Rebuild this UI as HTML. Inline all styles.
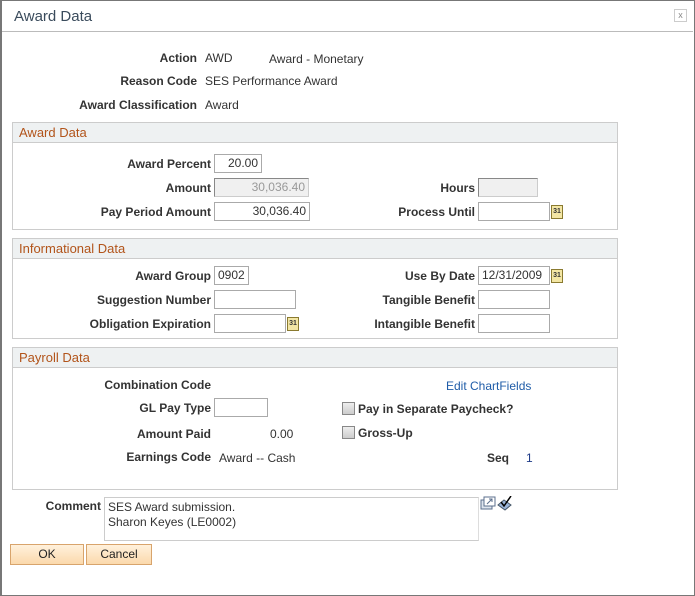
<!DOCTYPE html>
<html><head><style>
body{margin:0;width:695px;height:596px;background:#fff;font-family:"Liberation Sans",Arial,sans-serif;font-size:12px;color:#333;position:relative;overflow:hidden}
.a{position:absolute;white-space:nowrap;line-height:14px}
.l{font-weight:bold;text-align:right}
.in{position:absolute;height:17px;border:1px solid #aaa;background:#fff;box-sizing:content-box;font-size:12px;line-height:17px;padding:0 3px;color:#333;white-space:nowrap}
.sec{position:absolute;left:12px;width:604px;border:1px solid #ccc;border-top:none}
.hd{position:absolute;left:12px;width:606px;height:21px;background:#eef1f2;border:1px solid #ccc;box-sizing:border-box;color:#b2541a;font-size:13px;line-height:19px;padding-left:6px}
.cal{position:absolute;width:10px;height:12px;border:1px solid #8a7a30;background:#f3e6a4;font-size:7px;line-height:12px;text-align:center;font-weight:bold;color:#333}
.cb{position:absolute;width:11px;height:11px;border:1px solid #888;background:linear-gradient(#eee,#ccc)}
.btn{position:absolute;top:544px;height:19px;border:1px solid #d8a46c;background:linear-gradient(#fff1dc,#fbd9ac);text-align:center;line-height:19px;font-size:12px;color:#222}
</style></head><body>
<div style="position:absolute;left:0;top:0;width:695px;height:596px;border:1px solid #777;box-sizing:border-box;border-left:2px solid #777"></div>
<div style="position:absolute;left:2px;top:1px;width:691px;height:30px;border-bottom:1px solid #bbb"></div>
<div class="a" style="left:14px;top:8px;font-size:15px;line-height:18px;color:#3a4b5c">Award Data</div>
<div style="position:absolute;left:674px;top:9px;width:11px;height:11px;border:1px solid #ccc;font-size:9px;line-height:10px;text-align:center;color:#888">x</div>

<div class="a l" style="right:498px;top:51px">Action</div>
<div class="a" style="left:205px;top:51px">AWD</div>
<div class="a" style="left:269px;top:52px">Award - Monetary</div>
<div class="a l" style="right:498px;top:74px">Reason Code</div>
<div class="a" style="left:205px;top:74px">SES Performance Award</div>
<div class="a l" style="right:498px;top:98px">Award Classification</div>
<div class="a" style="left:205px;top:98px">Award</div>

<div class="sec" style="top:142px;height:87px"></div>
<div class="hd" style="top:122px">Award Data</div>
<div class="a l" style="right:484px;top:157px">Award Percent</div>
<div class="in" style="left:214px;top:154px;width:40px;text-align:right">20.00</div>
<div class="a l" style="right:484px;top:181px">Amount</div>
<div class="in" style="left:214px;top:178px;width:87px;text-align:right;background:#f0f0f0;color:#999;border-color:#888 #ccc #ccc #888">30,036.40</div>
<div class="a l" style="right:484px;top:205px">Pay Period Amount</div>
<div class="in" style="left:214px;top:202px;width:88px;text-align:right">30,036.40</div>
<div class="a l" style="right:220px;top:181px">Hours</div>
<div class="in" style="left:478px;top:178px;width:52px;background:#f0f0f0;border-color:#888 #ccc #ccc #888"></div>
<div class="a l" style="right:220px;top:205px">Process Until</div>
<div class="in" style="left:478px;top:202px;width:64px"></div>
<div class="cal" style="left:551px;top:205px">31</div>

<div class="sec" style="top:258px;height:80px"></div>
<div class="hd" style="top:238px">Informational Data</div>
<div class="a l" style="right:484px;top:269px">Award Group</div>
<div class="in" style="left:214px;top:266px;width:27px">0902</div>
<div class="a l" style="right:484px;top:293px">Suggestion Number</div>
<div class="in" style="left:214px;top:290px;width:74px"></div>
<div class="a l" style="right:484px;top:317px">Obligation Expiration</div>
<div class="in" style="left:214px;top:314px;width:64px"></div>
<div class="cal" style="left:287px;top:317px">31</div>
<div class="a l" style="right:220px;top:269px">Use By Date</div>
<div class="in" style="left:478px;top:266px;width:64px">12/31/2009</div>
<div class="cal" style="left:551px;top:269px">31</div>
<div class="a l" style="right:220px;top:293px">Tangible Benefit</div>
<div class="in" style="left:478px;top:290px;width:64px"></div>
<div class="a l" style="right:220px;top:317px">Intangible Benefit</div>
<div class="in" style="left:478px;top:314px;width:64px"></div>

<div class="sec" style="top:367px;height:122px"></div>
<div class="hd" style="top:347px">Payroll Data</div>
<div class="a l" style="right:484px;top:378px">Combination Code</div>
<div class="a" style="left:446px;top:379px;color:#1f5ca8">Edit ChartFields</div>
<div class="a l" style="right:484px;top:401px">GL Pay Type</div>
<div class="in" style="left:214px;top:398px;width:46px"></div>
<div class="cb" style="left:342px;top:402px"></div>
<div class="a l" style="left:358px;top:402px">Pay in Separate Paycheck?</div>
<div class="a l" style="right:484px;top:427px">Amount Paid</div>
<div class="a" style="left:270px;top:427px">0.00</div>
<div class="cb" style="left:342px;top:426px"></div>
<div class="a l" style="left:358px;top:426px">Gross-Up</div>
<div class="a l" style="right:484px;top:450px">Earnings Code</div>
<div class="a" style="left:219px;top:451px">Award -- Cash</div>
<div class="a l" style="left:487px;top:451px">Seq</div>
<div class="a" style="left:526px;top:451px;color:#1f3c88">1</div>

<div class="a l" style="right:594px;top:499px">Comment</div>
<div style="position:absolute;left:104px;top:497px;width:367px;height:38px;border:1px solid #ccc;border-right-color:#ddd;padding:2px 3px;font-size:12px;line-height:15px">SES Award submission.<br>Sharon Keyes (LE0002)</div>
<svg style="position:absolute;left:480px;top:496px" width="34" height="16"><rect x="1" y="4" width="11" height="9" fill="#dde4ee" stroke="#5b6f8c"/><rect x="4" y="1" width="11" height="9" fill="#fff" stroke="#5b6f8c"/><path d="M7 8 L12 3 M9 3 H12 V6" stroke="#5b6f8c" fill="none"/><path d="M18 9 L24 4 L31 9 L25 14 Z" fill="#9ab4d8" stroke="#456"/><path d="M21 6 L24 10 L31 0" stroke="#000" stroke-width="1.5" fill="none"/></svg>

<div class="btn" style="left:10px;width:72px">OK</div>
<div class="btn" style="left:86px;width:64px">Cancel</div>
</body></html>
